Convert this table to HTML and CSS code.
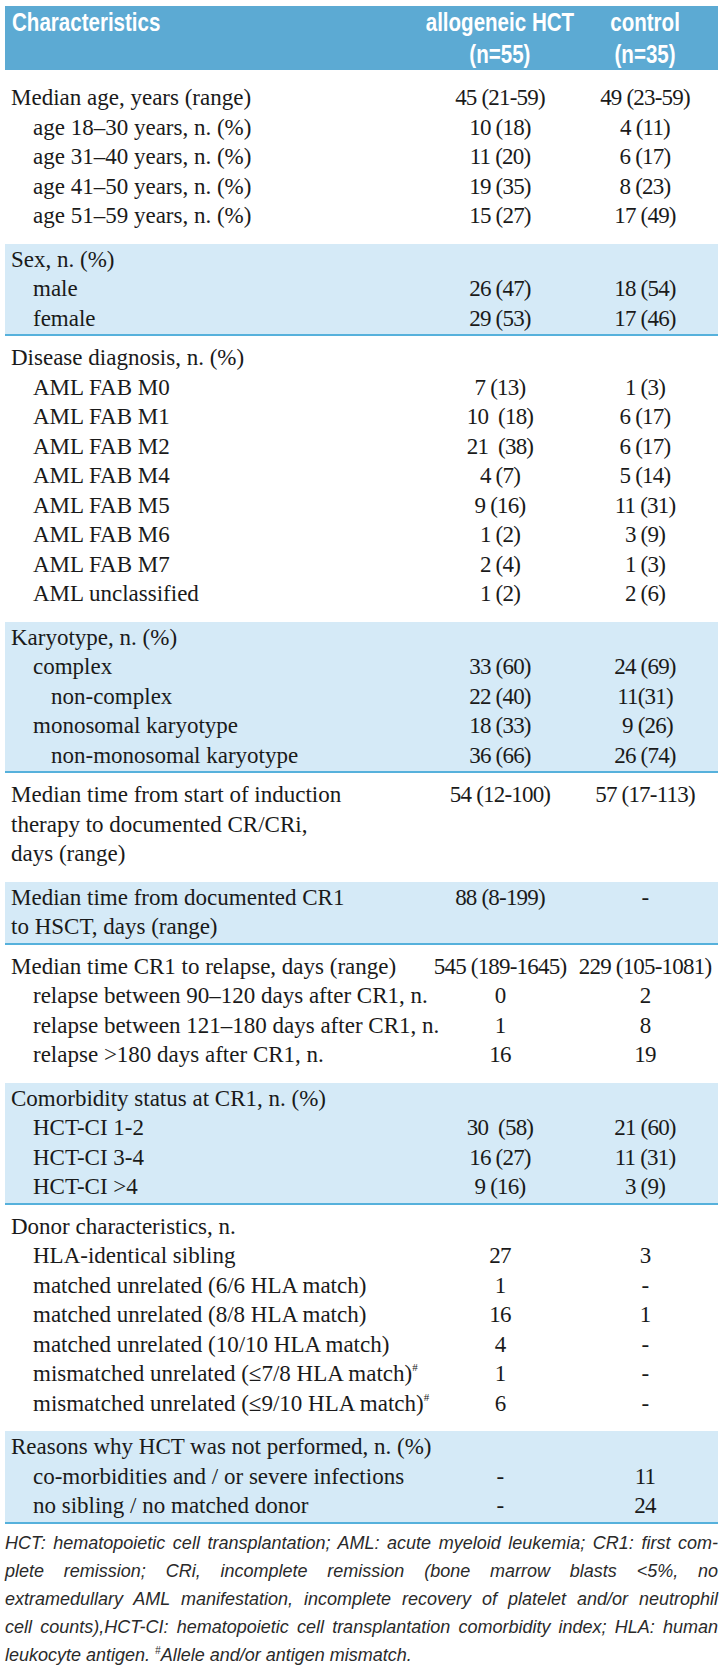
FILE: index.html
```html
<!DOCTYPE html>
<html lang="en">
<head>
<meta charset="utf-8">
<title>Patient characteristics</title>
<link rel="stylesheet" href="styles.css">
</head>
<body>
<div class="page">
<table class="chars">
  <colgroup><col class="c-label"><col class="c-allo"><col class="c-ctrl"></colgroup>
  <thead>
    <tr>
      <th class="h-label"><div class="hwrap left"><span class="hd">Characteristics</span></div></th>
      <th class="h-val"><div class="hwrap"><span class="hd">allogeneic HCT<br>(n=55)</span></div></th>
      <th class="h-val"><div class="hwrap"><span class="hd">control<br>(n=35)</span></div></th>
    </tr>
  </thead>
  <tbody class="plain first">
    <tr><td class="lab">Median age, years (range)</td><td class="val">45 (21-59)</td><td class="val">49 (23-59)</td></tr>
    <tr><td class="lab i1">age 18–30 years, n. (%)</td><td class="val">10 (18)</td><td class="val">4 (11)</td></tr>
    <tr><td class="lab i1">age 31–40 years, n. (%)</td><td class="val">11 (20)</td><td class="val">6 (17)</td></tr>
    <tr><td class="lab i1">age 41–50 years, n. (%)</td><td class="val">19 (35)</td><td class="val">8 (23)</td></tr>
    <tr><td class="lab i1">age 51–59 years, n. (%)</td><td class="val">15 (27)</td><td class="val">17 (49)</td></tr>
  </tbody>
  <tbody class="band">
    <tr><td class="lab">Sex, n. (%)</td><td class="val"></td><td class="val"></td></tr>
    <tr><td class="lab i1">male</td><td class="val">26 (47)</td><td class="val">18 (54)</td></tr>
    <tr><td class="lab i1">female</td><td class="val">29 (53)</td><td class="val">17 (46)</td></tr>
  </tbody>
  <tbody class="plain">
    <tr><td class="lab">Disease diagnosis, n. (%)</td><td class="val"></td><td class="val"></td></tr>
    <tr><td class="lab i1">AML FAB M0</td><td class="val">7 (13)</td><td class="val">1 (3)</td></tr>
    <tr><td class="lab i1">AML FAB M1</td><td class="val">10&nbsp; (18)</td><td class="val">6 (17)</td></tr>
    <tr><td class="lab i1">AML FAB M2</td><td class="val">21&nbsp; (38)</td><td class="val">6 (17)</td></tr>
    <tr><td class="lab i1">AML FAB M4</td><td class="val">4 (7)</td><td class="val">5 (14)</td></tr>
    <tr><td class="lab i1">AML FAB M5</td><td class="val">9 (16)</td><td class="val">11 (31)</td></tr>
    <tr><td class="lab i1">AML FAB M6</td><td class="val">1 (2)</td><td class="val">3 (9)</td></tr>
    <tr><td class="lab i1">AML FAB M7</td><td class="val">2 (4)</td><td class="val">1 (3)</td></tr>
    <tr><td class="lab i1">AML unclassified</td><td class="val">1 (2)</td><td class="val">2 (6)</td></tr>
  </tbody>
  <tbody class="band">
    <tr><td class="lab">Karyotype, n. (%)</td><td class="val"></td><td class="val"></td></tr>
    <tr><td class="lab i1">complex</td><td class="val">33 (60)</td><td class="val">24 (69)</td></tr>
    <tr><td class="lab i2">non-complex</td><td class="val">22 (40)</td><td class="val">11(31)</td></tr>
    <tr><td class="lab i1">monosomal karyotype</td><td class="val">18 (33)</td><td class="val">&nbsp;9 (26)</td></tr>
    <tr><td class="lab i2">non-monosomal karyotype</td><td class="val">36 (66)</td><td class="val">26 (74)</td></tr>
  </tbody>
  <tbody class="plain">
    <tr><td class="lab">Median time from start of induction<br>therapy to documented CR/CRi,<br>days (range)</td><td class="val">54 (12-100)</td><td class="val">57 (17-113)</td></tr>
  </tbody>
  <tbody class="band">
    <tr><td class="lab">Median time from documented CR1<br>to HSCT, days (range)</td><td class="val">88 (8-199)</td><td class="val">-</td></tr>
  </tbody>
  <tbody class="plain">
    <tr><td class="lab">Median time CR1 to relapse, days (range)</td><td class="val">545 (189-1645)</td><td class="val">229 (105-1081)</td></tr>
    <tr><td class="lab i1">relapse between 90–120 days after CR1, n.</td><td class="val">0</td><td class="val">2</td></tr>
    <tr><td class="lab i1">relapse between 121–180 days after CR1, n.</td><td class="val">1</td><td class="val">8</td></tr>
    <tr><td class="lab i1">relapse &gt;180 days after CR1, n.</td><td class="val">16</td><td class="val">19</td></tr>
  </tbody>
  <tbody class="band">
    <tr><td class="lab">Comorbidity status at CR1, n. (%)</td><td class="val"></td><td class="val"></td></tr>
    <tr><td class="lab i1">HCT-CI 1-2</td><td class="val">30&nbsp; (58)</td><td class="val">21 (60)</td></tr>
    <tr><td class="lab i1">HCT-CI 3-4</td><td class="val">16 (27)</td><td class="val">11 (31)</td></tr>
    <tr><td class="lab i1">HCT-CI &gt;4</td><td class="val">9 (16)</td><td class="val">3 (9)</td></tr>
  </tbody>
  <tbody class="plain">
    <tr><td class="lab">Donor characteristics, n.</td><td class="val"></td><td class="val"></td></tr>
    <tr><td class="lab i1">HLA-identical sibling</td><td class="val">27</td><td class="val">3</td></tr>
    <tr><td class="lab i1">matched unrelated (6/6 HLA match)</td><td class="val">1</td><td class="val">-</td></tr>
    <tr><td class="lab i1">matched unrelated (8/8 HLA match)</td><td class="val">16</td><td class="val">1</td></tr>
    <tr><td class="lab i1">matched unrelated (10/10 HLA match)</td><td class="val">4</td><td class="val">-</td></tr>
    <tr><td class="lab i1">mismatched unrelated (≤7/8 HLA match)<sup class="mark">#</sup></td><td class="val">1</td><td class="val">-</td></tr>
    <tr><td class="lab i1">mismatched unrelated (≤9/10 HLA match)<sup class="mark">#</sup></td><td class="val">6</td><td class="val">-</td></tr>
  </tbody>
  <tbody class="band">
    <tr><td class="lab">Reasons why HCT was not performed, n. (%)</td><td class="val"></td><td class="val"></td></tr>
    <tr><td class="lab i1">co-morbidities and / or severe infections</td><td class="val">-</td><td class="val">11</td></tr>
    <tr><td class="lab i1">no sibling / no matched donor</td><td class="val">-</td><td class="val">24</td></tr>
  </tbody>
</table>
<div class="note">
  <div class="nl">HCT: hematopoietic cell transplantation; AML: acute myeloid leukemia; CR1: first com-</div>
  <div class="nl">plete remission; CRi, incomplete remission (bone marrow blasts &lt;5%, no</div>
  <div class="nl">extramedullary AML manifestation, incomplete recovery of platelet and/or neutrophil</div>
  <div class="nl">cell counts),HCT-CI: hematopoietic cell transplantation comorbidity index; HLA: human</div>
  <div class="nl last">leukocyte antigen. <sup class="nmark">#</sup>Allele and/or antigen mismatch.</div>
</div>
</div>
</body>
</html>
```

FILE: styles.css
```css
html, body {
  margin: 0;
  padding: 0;
  background: #ffffff;
}

.page {
  width: 713px;
  padding: 6px 6px 0 5px;
}

.chars {
  width: 713px;
  table-layout: fixed;
  border-collapse: collapse;
  border-spacing: 0;
  font-family: "Liberation Serif", "Times New Roman", serif;
  font-size: 23px;
  color: #1a1a1a;
}

.c-label { width: 423px; }
.c-allo { width: 144px; }
.c-ctrl { width: 146px; }

.chars thead th {
  background: #5caad3;
  color: #ffffff;
  padding: 0;
  height: 64px;
  vertical-align: top;
  font-weight: 700;
}

.hwrap {
  display: flex;
  justify-content: center;
  white-space: nowrap;
}

.hwrap.left {
  justify-content: flex-start;
  padding-left: 7px;
}

.hd {
  display: inline-block;
  font-family: "Liberation Sans", Arial, sans-serif;
  font-size: 26px;
  line-height: 32px;
  font-weight: 700;
  text-align: center;
  transform: scaleX(0.79);
  transform-origin: center top;
}

.hwrap.left .hd {
  transform-origin: left top;
  text-align: left;
}

.chars td {
  padding: 0;
  line-height: 29.5px;
  vertical-align: top;
  white-space: nowrap;
}

.lab {
  padding-left: 6px !important;
  text-align: left;
}

.lab.i1 { padding-left: 28px !important; }
.lab.i2 { padding-left: 46px !important; }

.val {
  text-align: center;
  letter-spacing: -0.8px;
}

.plain tr:first-child td { padding-top: 7px; }
.plain.first tr:first-child td { padding-top: 13px; }
.plain tr:last-child td { padding-bottom: 13px; }

.band td {
  background: #d5eaf7;
}
.band tr:first-child td { padding-top: 1px; }
.band tr:last-child td {
  padding-bottom: 1px;
  border-bottom: 2px solid #56b1dc;
}

.mark {
  font-size: 11px;
  line-height: 0;
  vertical-align: 10px;
}

.note {
  margin-top: 5px;
  font-family: "Liberation Sans", Arial, sans-serif;
  font-style: italic;
  font-size: 18px;
  line-height: 28px;
  color: #2a2a2a;
}

.nl {
  text-align: justify;
  text-align-last: justify;
  white-space: nowrap;
}

.nl.last {
  text-align: left;
  text-align-last: left;
}

.nmark {
  font-size: 10px;
  line-height: 0;
  vertical-align: 7px;
}
```
